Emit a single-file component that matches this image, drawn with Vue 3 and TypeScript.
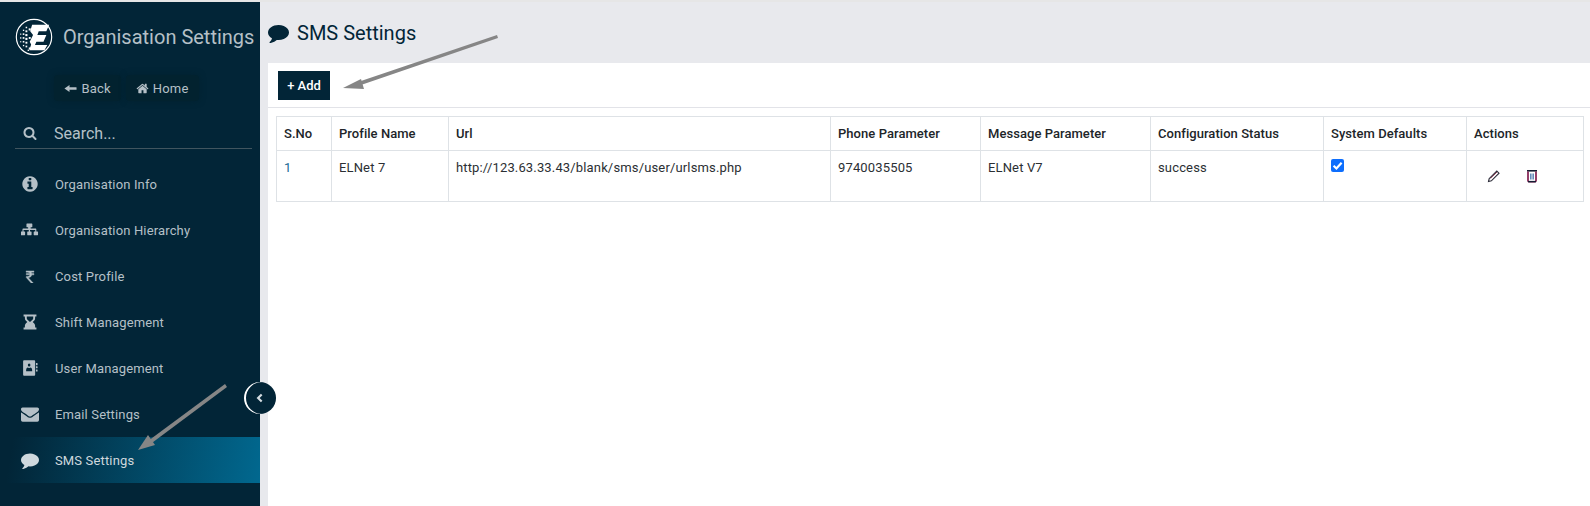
<script setup lang="ts">
const icons = {
  info: 'M1152 1376v-160q0-14-9-23t-23-9h-96v-512q0-14-9-23t-23-9h-320q-14 0-23 9t-9 23v160q0 14 9 23t23 9h96v320h-96q-14 0-23 9t-9 23v160q0 14 9 23t23 9h448q14 0 23-9t9-23zm-128-896v-160q0-14-9-23t-23-9h-192q-14 0-23 9t-9 23v160q0 14 9 23t23 9h192q14 0 23-9t9-23zm640 416q0 209-103 385.5t-279.5 279.5-385.5 103-385.5-103-279.5-279.5-103-385.5 103-385.5 279.5-279.5 385.5-103 385.5 103 279.5 279.5 103 385.5z',
  sitemap: 'M704 256h384q40 0 40 40v280q0 40-40 40h-128v140h500q64 0 64 64v236h132q40 0 40 40v280q0 40-40 40h-352q-40 0-40-40v-280q0-40 40-40h116v-172h-524v172h116q40 0 40 40v280q0 40-40 40h-352q-40 0-40-40v-280q0-40 40-40h116v-172h-524v172h116q40 0 40 40v280q0 40-40 40h-352q-40 0-40-40v-280q0-40 40-40h132v-236q0-64 64-64h500v-140h-128q-40 0-40-40v-280q0-40 40-40z',
  rupee: 'M400 240h1000v170h-360q60 70 84 170h276v170h-272q-28 150-140 246t-300 120l620 676h-270l-620-690v-150h140q130 0 216-50t112-152h-468v-170h456q-46-170-300-170h-174z',
  hourglass: 'M256 160h1280v200h-130v170q0 150-110 250l-130 116 130 116q110 100 110 250v170h130v200h-1280v-200h130v-170q0-150 110-250l130-116-130-116q-110-100-110-250v-170h-130zm320 200v170q0 90 70 150l250 220 250-220q70-60 70-150v-170z',
  book: 'M300 130h1020q90 0 90 90v1352q0 90-90 90h-1020q-90 0-90-90v-1352q0-90 90-90zm510 310q-130 0-130 150t130 150 130-150-130-150zm-300 660v120h600v-120q0-190-130-250-70 40-170 40t-170-40q-130 60-130 250zm980-690h130q30 0 30 30v140q0 30-30 30h-130zm0 320h130q30 0 30 30v140q0 30-30 30h-130zm0 320h130q30 0 30 30v140q0 30-30 30h-130z',
  envelope: 'M1792 710v794q0 66-47 113t-113 47h-1472q-66 0-113-47t-47-113v-794q44 49 101 87 362 246 497 345 57 42 92.5 65.5t94.5 48 110 24.5h2q51 0 110-24.5t94.5-48 92.5-65.5q170-123 498-345 57-39 100-87zm0-294q0 79-49 151t-122 123q-376 261-468 325-10 7-42.5 30.5t-54 38-52 32.5-57.5 27-50 9h-2q-23 0-50-9t-57.5-27-52-32.5-54-38-42.5-30.5q-91-64-262-182.5t-205-142.5q-62-42-117-115.5t-55-136.5q0-78 41.5-130t118.5-52h1472q65 0 112.5 47t47.5 113z',
  comment: 'M1792 896q0 174-120 321.5t-326 233-450 85.5q-70 0-145-8-198 175-460 242-49 14-114 22-17 2-30.5-9t-17.5-29v-1q-3-4-.5-12t2-10 4.5-9.5l6-9 7-8.5 8-9q7-8 31-34.5t34.5-38 31-39.5 32.5-51 27-59 26-76q-157-89-247.5-220t-90.5-281q0-130 71-248.5t191-204.5 286-136.5 348-50.5q244 0 450 85.5t326 233 120 321.5z',
  search: 'M1216 832q0-185-131.5-316.5t-316.5-131.5-316.5 131.5-131.5 316.5 131.5 316.5 316.5 131.5 316.5-131.5 131.5-316.5zm512 832q0 52-38 90t-90 38q-54 0-90-38l-343-342q-179 124-399 124-143 0-273.5-55.5t-225-150-150-225-55.5-273.5 55.5-273.5 150-225 225-150 273.5-55.5 273.5 55.5 225 150 150 225 55.5 273.5q0 220-124 399l343 343q37 37 37 90z',
  home: 'M1472 992v480q0 26-19 45t-45 19h-384v-384h-256v384h-384q-26 0-45-19t-19-45v-480q0-1 .5-3t.5-3l575-474 575 474q1 2 1 6zm223-69l-62 74q-8 9-21 11h-3q-13 0-21-7l-692-577-692 577q-12 8-24 7-13-2-21-11l-62-74q-8-10-7-23.5t11-21.5l719-599q32-26 76-26t76 26l244 204v-195q0-14 9-23t23-9h192q14 0 23 9t9 23v408l219 182q10 8 11 21.5t-7 23.5z',
  back: 'M60 896 760 420v300h920q50 0 50 50v250q0 50-50 50H760v300z'
}

const menu = [
  { label: 'Organisation Info', icon: icons.info, active: false, small: false },
  { label: 'Organisation Hierarchy', icon: icons.sitemap, active: false, small: false },
  { label: 'Cost Profile', icon: icons.rupee, active: false, small: true },
  { label: 'Shift Management', icon: icons.hourglass, active: false, small: false },
  { label: 'User Management', icon: icons.book, active: false, small: false },
  { label: 'Email Settings', icon: icons.envelope, active: false, small: false },
  { label: 'SMS Settings', icon: icons.comment, active: true, small: false }
]

const columns = ['S.No', 'Profile Name', 'Url', 'Phone Parameter', 'Message Parameter', 'Configuration Status', 'System Defaults', 'Actions']
const widths = [55, 117, 382, 150, 170, 173, 143, 117]

// dots on the left half of the logo
const dots = [
  [6, 17, 1.2], [6, 21, 1.4], [6, 25, 1.2], [9, 13, 1.4], [9, 17, 1.7], [9, 21, 1.8], [9, 25, 1.7], [9, 29, 1.4],
  [12, 10, 1.6], [12, 14, 2], [12, 18, 2.2], [12, 22, 2.2], [12, 26, 2], [12, 30, 1.8], [15.5, 12, 2.2], [15.5, 21, 2],
  [15.5, 32, 2], [14, 34, 1.4]
]
</script>

<template>
  <div class="page">
    <aside class="sidebar">
      <div class="brand">
        <svg class="logo" viewBox="0 0 40 40">
          <circle cx="20" cy="20" r="18.6" fill="none" stroke="#fff" stroke-width="1.2" />
          <rect v-for="(d, i) in dots" :key="i" :x="d[0] - d[2] / 2" :y="d[1] - d[2] / 2" :width="d[2]" :height="d[2]" fill="#fff" />
          <path d="M18 7H36L33 14H25L23.5 18H33L30 25H22.5L21 28.5H34L31 34H15L17 28 15.5 25 19 18 16 14z" fill="#fff" />
        </svg>
        <span class="brand-name">Organisation Settings</span>
      </div>

      <div class="nav-buttons">
        <a class="nav-btn">
          <svg viewBox="0 0 1792 1792"><path :d="icons.back" /></svg>
          Back
        </a>
        <a class="nav-btn">
          <svg viewBox="0 0 1792 1792"><path :d="icons.home" /></svg>
          Home
        </a>
      </div>

      <div class="search">
        <svg viewBox="0 0 1792 1792"><path :d="icons.search" /></svg>
        <span>Search...</span>
      </div>

      <ul class="menu">
        <li v-for="item in menu" :key="item.label" :class="{ active: item.active }">
          <span class="menu-icon">
            <svg :class="{ small: item.small }" viewBox="0 0 1792 1792"><path :d="item.icon" /></svg>
          </span>
          {{ item.label }}
        </li>
      </ul>
    </aside>

    <main class="main">
      <header class="title">
        <svg viewBox="0 0 1792 1792"><path :d="icons.comment" /></svg>
        <h1>SMS Settings</h1>
      </header>

      <section class="card">
        <div class="toolbar">
          <button class="add">+ Add</button>
        </div>
        <div class="table-wrap">
          <table>
            <colgroup>
              <col v-for="(w, i) in widths" :key="i" :style="{ width: w + 'px' }" />
            </colgroup>
            <thead>
              <tr>
                <th v-for="c in columns" :key="c">{{ c }}</th>
              </tr>
            </thead>
            <tbody>
              <tr>
                <td class="sno">1</td>
                <td>ELNet 7</td>
                <td>http://123.63.33.43/blank/sms/user/urlsms.php</td>
                <td>9740035505</td>
                <td>ELNet V7</td>
                <td>success</td>
                <td><span class="check"><svg viewBox="0 0 12 12"><path d="M2.4 6.2 5 8.8l4.8-5.4" /></svg></span></td>
                <td>
                  <div class="actions">
                    <svg class="edit" viewBox="0 0 14 14">
                      <path d="M2.2 9.6 9.8 2l2.2 2.2-7.6 7.6-2.9.7z" fill="none" stroke="#2d2d3a" stroke-width="1.1" />
                      <path d="M3.6 9.2 10 3" stroke="#8a3b52" stroke-width="1" />
                    </svg>
                    <svg class="trash" viewBox="0 0 14 14">
                      <path d="M2 1.8h10" stroke="#141d33" stroke-width="1.6" />
                      <path d="M3 2.5v9.2q0 1 1 1h6q1 0 1-1V2.5" fill="none" stroke="#7a0f45" stroke-width="1.6" />
                      <path d="M5.6 4.5v6M7 4.5v6M8.4 4.5v6" stroke="#3f6fa8" stroke-width=".9" />
                      <path d="M3 12.6h8" stroke="#141d33" stroke-width="1.4" />
                    </svg>
                  </div>
                </td>
              </tr>
            </tbody>
          </table>
        </div>
      </section>
    </main>

    <button class="collapse">
      <svg viewBox="0 0 10 10"><path d="M6.4 2 3.4 5l3 3" /></svg>
    </button>

    <svg class="arrows" viewBox="0 0 1590 506">
      <g fill="#868686" stroke="none">
        <path d="M497 35 358 82l1.5 3.5L498 38z" />
        <path d="M343 88l18-9 3 10z" />
        <path d="M225 384 148 441l2.5 3L227 387z" />
        <path d="M138 450l10-15 7 10z" />
      </g>
    </svg>
  </div>
</template>

<style scoped>
.page {
  display: flex;
  height: 504px;
  margin-top: 2px;
  font-family: Roboto, sans-serif;
  background: #e8e9ed;
  overflow: hidden;
}

.sidebar {
  width: 260px;
  flex-shrink: 0;
  background: #022537;
  color: #b5c0c7;
}

.brand {
  display: flex;
  align-items: center;
  height: 69px;
  padding-left: 15px;
}

.logo {
  width: 38px;
  height: 38px;
  flex-shrink: 0;
}

.brand-name {
  margin-left: 10px;
  font-size: 20px;
  white-space: nowrap;
}

.nav-buttons {
  display: flex;
  justify-content: center;
  gap: 5px;
  margin-top: 4px;
  padding-right: 7px;
}

.nav-btn {
  display: flex;
  align-items: center;
  gap: 4px;
  height: 26px;
  padding: 0 10px;
  font-size: 13px;
  letter-spacing: 0.2px;
  border-radius: 4px;
  background: #02222f;
  box-shadow: 0 0 6px #02212f;
}

.nav-btn svg {
  width: 13px;
  height: 13px;
  fill: currentColor;
}

.search {
  display: flex;
  align-items: center;
  height: 30px;
  margin: 17px 8px 0 15px;
  padding-left: 8px;
  font-size: 16px;
  border-bottom: 1px solid #41555f;
}

.search svg {
  width: 14px;
  height: 14px;
  margin-right: 17px;
  fill: currentColor;
}

.menu {
  list-style: none;
  margin: 12px 0 0;
  padding: 0;
}

.menu li {
  display: flex;
  align-items: center;
  height: 46px;
  padding-left: 20px;
  font-size: 13px;
  letter-spacing: 0.15px;
}

.menu li.active {
  color: #cfd8dd;
  background: linear-gradient(100deg, #022537 5%, #01688f 100%);
}

.menu-icon {
  display: flex;
  justify-content: center;
  width: 20px;
  margin-right: 15px;
}

.menu-icon svg {
  width: 18px;
  height: 18px;
  fill: currentColor;
}

.menu-icon svg.small {
  width: 14px;
  height: 14px;
  stroke: currentColor;
  stroke-width: 50;
}

.main {
  flex: 1;
  min-width: 0;
  padding-left: 8px;
}

.title {
  display: flex;
  align-items: center;
  height: 61px;
  color: #022537;
}

.title svg {
  width: 21px;
  height: 21px;
  fill: currentColor;
}

.title h1 {
  margin: 0 0 0 8px;
  font-size: 20px;
  font-weight: 400;
}

.card {
  height: 443px;
  background: #fff;
}

.toolbar {
  height: 45px;
  padding: 8px 0 0 10px;
  box-sizing: border-box;
  border-bottom: 1px solid #e2e3e8;
}

.add {
  width: 52px;
  height: 29px;
  padding: 0;
  border: none;
  font-family: inherit;
  font-size: 13px;
  font-weight: 500;
  color: #fff;
  background: #022537;
}

.table-wrap {
  padding: 8px 6px 0 8px;
}

table {
  width: 1308px;
  border-collapse: collapse;
  table-layout: fixed;
  font-size: 13px;
  color: #212529;
}

th,
td {
  border: 1px solid #dee2e6;
  padding: 8px 7px;
  text-align: left;
  vertical-align: top;
}

th {
  height: 17px;
  font-weight: 500;
  line-height: 17px;
  letter-spacing: 0.05px;
}

td {
  height: 51px;
  box-sizing: border-box;
  line-height: 17px;
  letter-spacing: 0.15px;
  color: #2b2f33;
}

td.sno {
  color: #1a6a96;
}

.check {
  display: block;
  width: 13px;
  height: 13px;
  border-radius: 2px;
  background: #0d6efd;
}

.check svg {
  display: block;
  fill: none;
  stroke: #fff;
  stroke-width: 2;
}

.actions {
  display: flex;
  align-items: center;
  gap: 24px;
  margin: 10px 0 0 13px;
}

.edit,
.trash {
  width: 14px;
  height: 14px;
}

.collapse {
  position: absolute;
  left: 244px;
  top: 382px;
  display: flex;
  align-items: center;
  justify-content: center;
  width: 32px;
  height: 32px;
  padding: 0;
  border: none;
  border-radius: 50%;
  background: #022537;
  box-shadow: inset 2px 0 0 #fff;
}

.collapse svg {
  width: 12px;
  height: 12px;
  fill: none;
  stroke: #d5dde2;
  stroke-width: 1.8;
}

.arrows {
  position: absolute;
  left: 0;
  top: 0;
  width: 1590px;
  height: 506px;
  pointer-events: none;
}
</style>

<style>
html,
body {
  margin: 0;
  background: #e6e6e6;
  overflow: hidden;
}
</style>
